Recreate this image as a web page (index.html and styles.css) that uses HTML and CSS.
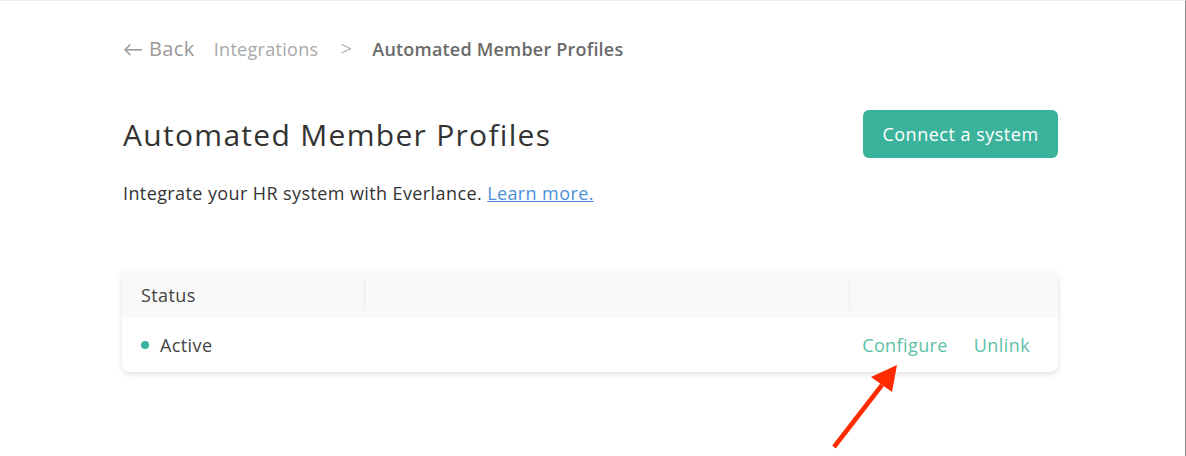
FILE: index.html
```html
<!DOCTYPE html>
<html lang="en">
<head>
    <meta charset="UTF-8">
    <title>Automated Member Profiles</title>
    <link rel="stylesheet" href="styles.css">
</head>
<body>
    <div class="page">
        <!-- Breadcrumb -->
        <nav class="breadcrumb">
            <a href="#" class="back">&larr; Back</a>
            <a href="#" class="crumb">Integrations</a>
            <span class="sep">&gt;</span>
            <span class="current">Automated Member Profiles</span>
        </nav>

        <!-- Title row -->
        <div class="title-row">
            <h1>Automated Member Profiles</h1>
            <button class="connect-btn">Connect a system</button>
        </div>

        <p class="intro">Integrate your HR system with Everlance. <a href="#">Learn more.</a></p>

        <!-- Status table -->
        <div class="status-table">
            <div class="row head">
                <div class="cell">Status</div>
                <div class="cell divided"></div>
                <div class="cell divided"></div>
            </div>
            <div class="row">
                <div class="cell"><span class="dot"></span>Active</div>
                <div class="cell"></div>
                <div class="cell actions">
                    <a href="#">Configure</a>
                    <a href="#">Unlink</a>
                </div>
            </div>
        </div>
    </div>

    <!-- Annotation arrow -->
    <svg class="annotation" width="80" height="100" viewBox="826 356 80 100">
        <line x1="834" y1="446" x2="882" y2="384" stroke="#ff2a00" stroke-width="4.5" />
        <polygon points="897,364 871,376 892,391" fill="#ff2a00" />
    </svg>
</body>
</html>
```

FILE: styles.css
```css
* {
    margin: 0;
    padding: 0;
    box-sizing: border-box;
}

html, body {
    height: 100%;
}

body {
    font-family: 'Open Sans', 'Lato', sans-serif;
    letter-spacing: 0.4px;
    background-color: #fff;
    color: #333;
    border-top: 1px solid #ececec;
    border-right: 1px solid #8a8a8a;
    position: relative;
    overflow: hidden;
}

.page {
    width: 936px;
    margin-left: 122px;
    padding-top: 34px;
}

a {
    text-decoration: none;
}

.breadcrumb {
    display: flex;
    align-items: baseline;
    padding-left: 1px;
    line-height: 28px;
}

.breadcrumb .back {
    color: #9a9a9a;
    font-size: 20px;
    margin-right: 19px;
}

.breadcrumb .crumb {
    color: #a8a8a8;
    font-size: 18px;
    letter-spacing: 0.3px;
}

.breadcrumb .sep {
    color: #8a8a8a;
    font-size: 20px;
    font-weight: 300;
    margin: 0 20px 0 22px;
}

.breadcrumb .current {
    color: #6a6a6a;
    font-size: 18px;
    font-weight: 600;
    letter-spacing: 0.2px;
}

.title-row {
    display: flex;
    justify-content: space-between;
    align-items: center;
    margin-top: 47px;
}

.title-row h1 {
    font-size: 30px;
    font-weight: normal;
    color: #333;
    padding-left: 1px;
    letter-spacing: 1.3px;
}

.connect-btn {
    font-family: inherit;
    font-size: 18px;
    letter-spacing: 0.5px;
    color: #fff;
    background-color: #3bb39c;
    border: none;
    border-radius: 6px;
    width: 195px;
    height: 48px;
    cursor: pointer;
}

.intro {
    font-size: 18px;
    color: #333;
    margin-top: 23px;
    padding-left: 1px;
}

.intro a {
    color: #4a90d9;
    text-decoration: underline;
}

.status-table {
    margin-top: 66px;
    border-radius: 8px;
    box-shadow: 0 2px 6px rgba(0, 0, 0, 0.13);
    overflow: hidden;
}

.status-table .row {
    display: grid;
    grid-template-columns: 242px 485px 1fr;
    align-items: center;
}

.status-table .head {
    background-color: #f9f9f9;
    height: 47px;
}

.status-table .row:not(.head) {
    height: 54px;
}

.cell {
    padding-left: 19px;
    font-size: 18px;
    color: #444;
    display: flex;
    align-items: center;
}

.head .cell {
    height: 30px;
}

.head .divided {
    border-left: 1px solid #ebebeb;
}

.dot {
    width: 8px;
    height: 8px;
    border-radius: 50%;
    background-color: #3bb39c;
    margin-right: 11px;
}

.actions {
    justify-content: flex-end;
    gap: 26px;
    padding-left: 0;
    padding-right: 28px;
}

.actions a {
    color: #5dbfa9;
}

.annotation {
    position: absolute;
    left: 826px;
    top: 356px;
}
```
